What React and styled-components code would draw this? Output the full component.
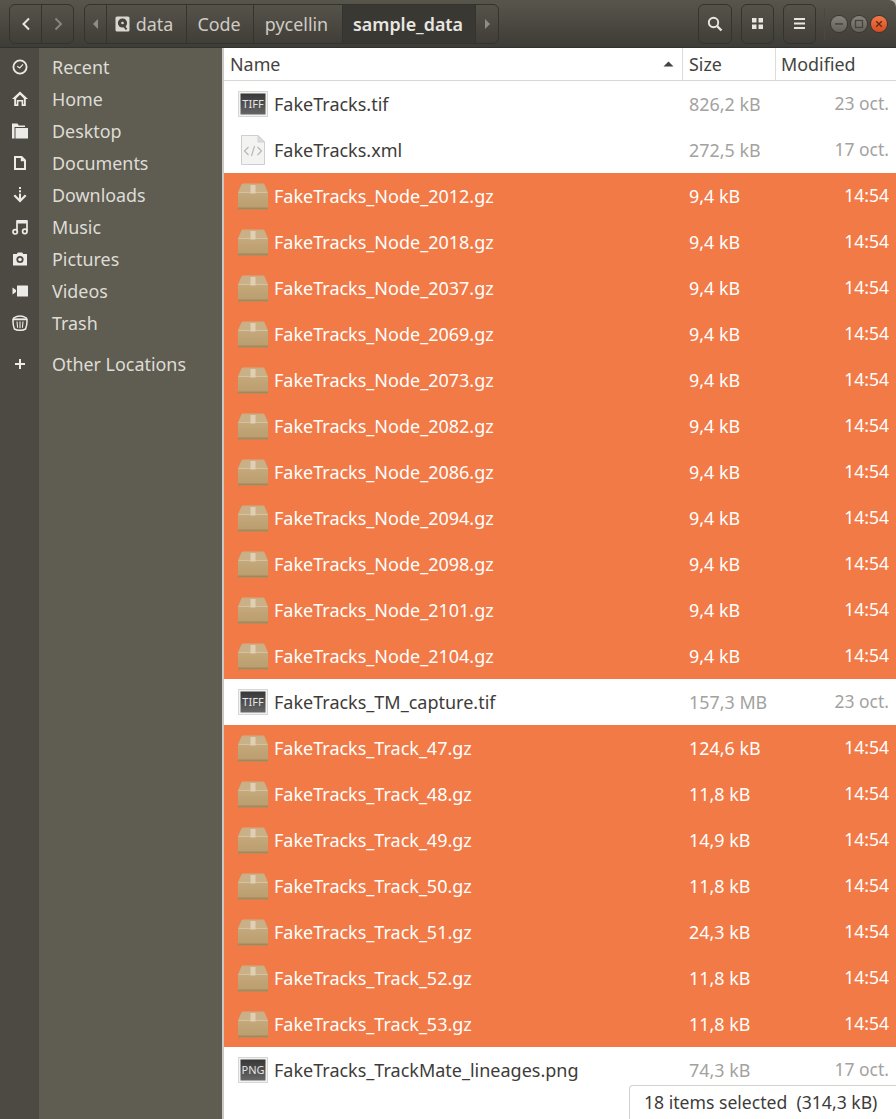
import React from "react";
import styled, { createGlobalStyle } from "styled-components";

const Global = createGlobalStyle`
  html, body { margin: 0; padding: 0; background: #fff; }
  body { font-family: "Noto Sans", "Open Sans", sans-serif; }
`;
const Win = styled.div`
  width: 896px; height: 1119px; overflow: hidden; display: flex; flex-direction: column; position: relative; background: #b9b8b3;
`;
const TitleBar = styled.header`
  height: 48px; flex: none; box-sizing: border-box; display: flex; align-items: center; padding: 0 0 0 9px;
  background: linear-gradient(#58554c, #3e3c36);
  border-bottom: 1px solid #33312d; border-top-right-radius: 7px;
`;
const BtnGroup = styled.div`
  display: flex; height: 40px; box-sizing: border-box; border: 1px solid #35332e; border-radius: 6px; overflow: hidden;
`;
const NavBtn = styled.div`
  width: 31px; display: flex; align-items: center; justify-content: center;
  & + & { border-left: 1px solid #35332e; }
`;
const Crumbs = styled(BtnGroup)`
  margin-left: 10px;
`;
const Crumb = styled.div`
  display: flex; align-items: center; gap: 6px; color: ${p => p.$active ? "#e8e6e1" : "#cfccc5"};
  font-size: 17.9px; font-weight: ${p => p.$active ? 600 : 400}; box-sizing: border-box; width: ${p => p.$w}px;
  padding-right: ${p => p.$pr || 0}px;
  background: ${p => p.$active ? "#3a3833" : "transparent"};
  border-left: 1px solid #35332e; border-right: ${p => p.$active ? "1px solid #35332e" : "none"}; justify-content: center;
  & > span { white-space: nowrap; }
`;
const ScrollArrow = styled.div`
  width: ${p => p.$w || 21}px; display: flex; align-items: center; justify-content: center; flex: none;
`;
const Spacer = styled.div`flex: 1;`;
const ToolBtn = styled.div`
  width: ${p => p.$w || 33}px; height: 40px; box-sizing: border-box; border: 1px solid #35332e; border-radius: 6px; margin-left: 9px;
  display: flex; align-items: center; justify-content: center;
`;
const Sep = styled.div`width: 1px; height: 32px; background: #4a4841; margin: 0 6px 0 8px;`;
const WinBtns = styled.div`display: flex; gap: 4px; margin-right: 9px; align-items: center;`;
const WinBtn = styled.div`
  width: 16px; height: 16px; border-radius: 50%; display: flex; align-items: center; justify-content: center;
  background: ${p => p.$close ? "linear-gradient(#f0794a,#d64c20)" : "linear-gradient(#85827a,#65625a)"};
  box-shadow: 0 0 0 1px #3a3833;
`;
const Body = styled.div`flex: 1; display: flex; min-height: 0;`;
const Side = styled.nav`
  width: 222px; flex: none;
  background: linear-gradient(to right, #4c4a43 39px, #5f5d51 39px);
`;
const SideList = styled.div`
  padding-top: 3px; display: flex; flex-direction: column;
`;
const SideRow = styled.div`
  height: 32px; display: flex; align-items: center; margin-top: ${p => p.$mt || 0}px;
`;
const SideIcon = styled.div`
  width: 39px; display: flex; align-items: center; justify-content: center; flex: none;
`;
const SideLabel = styled.span`
  margin-left: 13px; color: #dedcd6; font-size: 17.9px;
`;
const SideEdge = styled.div`width: 2px; flex: none; background: #c9c8c5;`;
const Main = styled.main`flex: 1; min-width: 0; background: #fff; display: flex; flex-direction: column;`;
const HeaderRow = styled.div`
  height: 33px; flex: none; box-sizing: border-box; border-bottom: 1px solid #d9d8d5; display: grid;
  grid-template-columns: 458px 93px 1fr; color: #45433e; font-size: 17.9px; align-items: stretch;
`;
const HeadCell = styled.div`
  display: flex; align-items: center; padding-left: ${p => p.$pl || 6}px; border-left: ${p => p.$first ? "none" : "1px solid #dcdbd8"};
  box-sizing: border-box; justify-content: space-between;
`;
const SortArrow = styled.svg`margin-right: 8px;`;
const Rows = styled.div`display: flex; flex-direction: column;`;
const Row = styled.div`
  height: 46px; display: grid; grid-template-columns: 50px 415px 1fr 1fr; align-items: center; font-size: 17.9px;
  background: ${p => p.$sel ? "#f17a47" : "#fff"}; color: ${p => p.$sel ? "#fff" : "#3d3c39"};
`;
const IconCell = styled.div`display: flex; justify-content: center; padding-left: 8px; box-sizing: border-box;`;
const NameCell = styled.div`white-space: nowrap; font-size: 18px;`;
const SizeCell = styled.div`
  white-space: nowrap; width: 96px; color: ${p => p.$sel ? "#fff" : "#a3a2a0"};
`;
const DateCell = styled.div`
  text-align: right; padding-right: 7px; white-space: nowrap; padding-bottom: 2px; margin-left: -30px; font-size: 17.5px; color: ${p => p.$sel ? "#fff" : "#a3a2a0"};
`;
const Status = styled.div`
  position: absolute; right: 0; bottom: 0; width: 267px; height: 34px; box-sizing: border-box; background: #fff;
  border: 1px solid #d2d1ce; border-right: none; border-bottom: none; border-top-left-radius: 4px;
  display: flex; align-items: center; padding-left: 14px; padding-bottom: 2px; color: #3d3c39; font-size: 17.6px; white-space: pre;
`;

const I = ({ children, w = 16, h = 16 }) => (
  <svg width={w} height={h} viewBox={`0 0 ${w} ${h}`} fill="none">{children}</svg>
);
const C = "#ecebe8";
const BG = "#4c4a43";
const icons = {
  recent: <I><circle cx="8" cy="8" r="6.6" stroke={C} strokeWidth="1.8"/><path d="M5.2 7.2 L7.8 9 L11 5.4" stroke={C} strokeWidth="1.2"/></I>,
  home: <I><path d="M8 0.5 L16 8 L13.8 8 L13.8 15 L9.6 15 L9.6 10.5 L6.4 10.5 L6.4 15 L2.2 15 L2.2 8 L0 8 Z" fill={C}/><path d="M8 3.8 L4.2 7.4 V13.2 H4.9 V8.9 H11.1 V13.2 H11.8 V7.4 Z" fill={BG}/></I>,
  desktop: <I><path d="M0 0.5 H5.5 L6.8 2.5 H13 V4 H2.5 V15.5 H0 Z" fill={C}/><rect x="3.5" y="5" width="12.5" height="10.5" fill={C}/></I>,
  docs: <I><path d="M2 1 H10 L14 5 V15 H2 Z M4 3 V13 H12 V6.2 H8.8 V3 Z" fill={C} fillRule="evenodd"/></I>,
  downloads: <I><rect x="7" y="0" width="2" height="2" fill={C}/><rect x="7" y="3.3" width="2" height="2" fill={C}/><rect x="7" y="6.6" width="2" height="6" fill={C}/><path d="M2.3 8.3 L8 14 L13.7 8.3" stroke={C} strokeWidth="2.2"/></I>,
  music: <I><path d="M5 12.5 V2 H15 V12" stroke={C} strokeWidth="1.7"/><rect x="5" y="1" width="10" height="3.5" fill={C}/><circle cx="3.2" cy="12.8" r="2.2" stroke={C} strokeWidth="1.7"/><circle cx="12.8" cy="12.4" r="2.2" stroke={C} strokeWidth="1.7"/></I>,
  pictures: <I><path d="M1 3 H4.8 L5.8 1.5 H10.2 L11.2 3 H15 V14.5 H1 Z" fill={C}/><circle cx="8" cy="8.5" r="3.6" fill={BG}/><circle cx="8" cy="8.5" r="1.8" fill={C}/></I>,
  videos: <I><rect x="5" y="2.5" width="11" height="11" rx="0.5" fill={C}/><path d="M0.5 4.5 L4 7 V9 L0.5 11.5Z" fill={C}/></I>,
  trash: <I><path d="M1.5 3 Q8 -1 14.5 3 V4.2 H1.5 Z" stroke={C} strokeWidth="1.3"/><path d="M1 4.5 H15 Q15.2 10 13.6 14 Q8 16.6 2.4 14 Q0.8 10 1 4.5 Z" stroke={C} strokeWidth="1.5"/><path d="M5 6.5 L5.6 12.8 M8 6.5 V13.2 M11 6.5 L10.4 12.8" stroke={C} strokeWidth="1.1"/></I>,
  plus: <I><path d="M8 3 V13 M3 8 H13" stroke={C} strokeWidth="2"/></I>,
};
const sideItems = [
  ["recent", "Recent"], ["home", "Home"], ["desktop", "Desktop"], ["docs", "Documents"], ["downloads", "Downloads"],
  ["music", "Music"], ["pictures", "Pictures"], ["videos", "Videos"], ["trash", "Trash"],
];

const Tiff = ({ label }) => (
  <svg width="30" height="26" viewBox="0 0 30 26">
    <defs><linearGradient id={`g${label}`} x1="0" y1="0" x2="0" y2="1"><stop offset="0" stopColor="#383838"/><stop offset="1" stopColor="#666"/></linearGradient></defs>
    <rect x="0.5" y="0.5" width="29" height="25" fill="#f2f2f1" stroke="#d6d6d4"/>
    <rect x="2.5" y="2.5" width="25" height="21" fill={`url(#g${label})`}/>
    <text x="15" y="17" fontSize="11" fill="#e4e4e4" textAnchor="middle" fontFamily="Noto Sans, sans-serif">{label}</text>
  </svg>
);
const Xml = () => (
  <svg width="26" height="32" viewBox="0 0 26 32">
    <path d="M1.5 1.5 H18 L24.5 8 V30.5 H1.5 Z" fill="#f3f3f2" stroke="#cfcfcd"/>
    <path d="M18 1.5 V8 H24.5 Z" fill="#dcdcda" stroke="#cfcfcd"/>
    <path d="M8.5 13 L4.5 17 L8.5 21 M17.5 13 L21.5 17 L17.5 21 M14.5 12 L11.5 22" stroke="#b5b5b3" strokeWidth="1.1" fill="none"/>
  </svg>
);
const Box = () => (
  <svg width="30" height="27" viewBox="0 0 30 27">
    <defs>
      <linearGradient id="bx" x1="0" y1="0" x2="0" y2="1"><stop offset="0" stopColor="#cbae83"/><stop offset="1" stopColor="#ba9d6d"/></linearGradient>
    </defs>
    <path d="M3.5 1.5 Q3.8 0.5 5 0.5 H25 Q26.2 0.5 26.5 1.5 L30 9 V25 Q30 26.5 28.5 26.5 H1.5 Q0 26.5 0 25 V9 Z" fill="url(#bx)"/>
    <path d="M0.7 9.3 L3.6 2 H26.4 L29.3 9.3 Z" fill="#c9b086"/>
    <rect x="0.5" y="9" width="29" height="1" fill="#d6c29e"/>
    <rect x="0" y="24.5" width="30" height="2" fill="#a5875b"/>
    <rect x="12.5" y="2" width="5" height="8.5" fill="#dfd0b5"/>
  </svg>
);

const files = [
  ["FakeTracks.tif", "826,2 kB", "23 oct.", "tiff"],
  ["FakeTracks.xml", "272,5 kB", "17 oct.", "xml"],
  ...["2012","2018","2037","2069","2073","2082","2086","2094","2098","2101","2104"].map(n => [`FakeTracks_Node_${n}.gz`, "9,4 kB", "14:54", "gz"]),
  ["FakeTracks_TM_capture.tif", "157,3 MB", "23 oct.", "tiff"],
  ["FakeTracks_Track_47.gz", "124,6 kB", "14:54", "gz"],
  ["FakeTracks_Track_48.gz", "11,8 kB", "14:54", "gz"],
  ["FakeTracks_Track_49.gz", "14,9 kB", "14:54", "gz"],
  ["FakeTracks_Track_50.gz", "11,8 kB", "14:54", "gz"],
  ["FakeTracks_Track_51.gz", "24,3 kB", "14:54", "gz"],
  ["FakeTracks_Track_52.gz", "11,8 kB", "14:54", "gz"],
  ["FakeTracks_Track_53.gz", "11,8 kB", "14:54", "gz"],
  ["FakeTracks_TrackMate_lineages.png", "74,3 kB", "17 oct.", "png"],
];
const fileIcon = t => t === "tiff" ? <Tiff label="TIFF"/> : t === "png" ? <Tiff label="PNG"/> : t === "xml" ? <Xml/> : <Box/>;

export default function App() {
  return (
    <Win>
      <Global/>
      <TitleBar>
        <BtnGroup>
          <NavBtn><svg width="12" height="14" viewBox="0 0 12 14"><path d="M9 1.5 L3.5 7 L9 12.5" stroke="#e8e6e1" strokeWidth="2" fill="none"/></svg></NavBtn>
          <NavBtn><svg width="12" height="14" viewBox="0 0 12 14"><path d="M3.5 1.5 L9 7 L3.5 12.5" stroke="#87857c" strokeWidth="2" fill="none"/></svg></NavBtn>
        </BtnGroup>
        <Crumbs>
          <ScrollArrow><svg width="8" height="12" viewBox="0 0 8 12"><path d="M6 1 L1 6 L6 11Z" fill="#8f8d85"/></svg></ScrollArrow>
          <Crumb $w={80} $pr={5}>
            <svg width="15" height="16" viewBox="0 0 15 16">
              <rect x="0.5" y="0.5" width="14" height="15" rx="1.5" fill="#d9d7d1"/>
              <circle cx="7.5" cy="7" r="4.6" fill="#45433c"/><circle cx="7.5" cy="7" r="1.3" fill="#d9d7d1"/>
              <path d="M8 8.5 L11.5 13.5" stroke="#45433c" strokeWidth="2"/>
            </svg>
            <span>data</span>
          </Crumb>
          <Crumb $w={67} $pr={2}><span>Code</span></Crumb>
          <Crumb $w={89} $pr={3}><span>pycellin</span></Crumb>
          <Crumb $w={134} $pr={2} $active><span>sample_data</span></Crumb>
          <ScrollArrow $w={22}><svg width="8" height="12" viewBox="0 0 8 12"><path d="M2 1 L7 6 L2 11Z" fill="#8f8d85"/></svg></ScrollArrow>
        </Crumbs>
        <Spacer/>
        <ToolBtn $w={34}><svg width="16" height="16" viewBox="0 0 16 16"><circle cx="6.5" cy="6.5" r="4.7" stroke="#e8e6e1" strokeWidth="1.9" fill="none"/><path d="M10 10 L14.5 14.5" stroke="#e8e6e1" strokeWidth="2.4"/></svg></ToolBtn>
        <ToolBtn><svg width="11" height="11" viewBox="0 0 11 11" fill="#e8e6e1"><rect width="4.5" height="4.5"/><rect x="6.5" width="4.5" height="4.5"/><rect y="6.5" width="4.5" height="4.5"/><rect x="6.5" y="6.5" width="4.5" height="4.5"/></svg></ToolBtn>
        <ToolBtn><svg width="11" height="11" viewBox="0 0 11 11" fill="#e8e6e1"><rect width="11" height="2"/><rect y="4.5" width="11" height="2"/><rect y="9" width="11" height="2"/></svg></ToolBtn>
        <Sep/>
        <WinBtns>
          <WinBtn><svg width="10" height="10" viewBox="0 0 10 10"><rect x="1" y="4.2" width="8" height="1.5" fill="#45433c"/></svg></WinBtn>
          <WinBtn><svg width="10" height="10" viewBox="0 0 10 10"><rect x="1.5" y="1.5" width="7" height="7" fill="none" stroke="#45433c" strokeWidth="1.3"/></svg></WinBtn>
          <WinBtn $close><svg width="10" height="10" viewBox="0 0 10 10"><path d="M2.2 2.2 L7.8 7.8 M7.8 2.2 L2.2 7.8" stroke="#5a2a15" strokeWidth="1.3"/></svg></WinBtn>
        </WinBtns>
      </TitleBar>
      <Body>
        <Side>
          <SideList>
            {sideItems.map(([k, l]) => (
              <SideRow key={l}><SideIcon>{icons[k]}</SideIcon><SideLabel>{l}</SideLabel></SideRow>
            ))}
            <SideRow $mt={9}><SideIcon>{icons.plus}</SideIcon><SideLabel>Other Locations</SideLabel></SideRow>
          </SideList>
        </Side>
        <SideEdge/>
        <Main>
          <HeaderRow>
            <HeadCell $first>Name<SortArrow width="11" height="6" viewBox="0 0 11 6"><path d="M0.5 5.5 L5.5 0.5 L10.5 5.5Z" fill="#45433e"/></SortArrow></HeadCell>
            <HeadCell>Size</HeadCell>
            <HeadCell $pl={5}>Modified</HeadCell>
          </HeaderRow>
          <Rows>
            {files.map(([n, s, d, t]) => {
              const sel = t === "gz";
              return (
                <Row key={n} $sel={sel}>
                  <IconCell>{fileIcon(t)}</IconCell>
                  <NameCell>{n}</NameCell>
                  <SizeCell $sel={sel}>{s}</SizeCell>
                  <DateCell $sel={sel}>{d}</DateCell>
                </Row>
              );
            })}
          </Rows>
        </Main>
      </Body>
      <Status>{"18 items selected  (314,3 kB)"}</Status>
    </Win>
  );
}
